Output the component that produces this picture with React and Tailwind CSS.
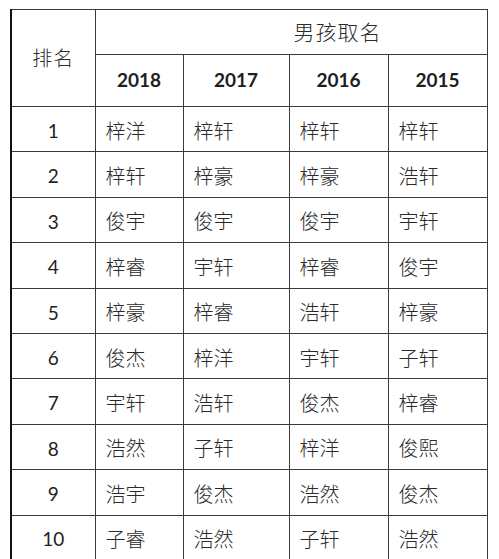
import React from "react";

const years = ["2018", "2017", "2016", "2015"];

const rows = [
  ["梓洋", "梓轩", "梓轩", "梓轩"],
  ["梓轩", "梓豪", "梓豪", "浩轩"],
  ["俊宇", "俊宇", "俊宇", "宇轩"],
  ["梓睿", "宇轩", "梓睿", "俊宇"],
  ["梓豪", "梓睿", "浩轩", "梓豪"],
  ["俊杰", "梓洋", "宇轩", "子轩"],
  ["宇轩", "浩轩", "俊杰", "梓睿"],
  ["浩然", "子轩", "梓洋", "俊熙"],
  ["浩宇", "俊杰", "浩然", "俊杰"],
  ["子睿", "浩然", "子轩", "浩然"],
];

const cjk = "font-['SimSun','Noto_Sans_CJK_SC',sans-serif] font-light text-[#2a2a2a]";
const num = "font-['Lato','Liberation_Sans',sans-serif]";
const cell = "border-[1.5px] border-[#3a3a3a]";

const App = () => {
  return (
    <div className="w-[499px] h-[559px] overflow-hidden bg-white text-[#1e1e1e] pt-[9px] pl-[10px]">
      <table className="table-fixed border-collapse w-[476px] border-l-2 border-l-[#111]">
        <colgroup>
          <col className="w-[84px]" />
          <col className="w-[88px]" />
          <col className="w-[106px]" />
          <col className="w-[99px]" />
          <col className="w-[99px]" />
        </colgroup>
        <thead>
          {/* 男孩取名 header */}
          <tr className="h-[45px]">
            <th
              rowSpan={2}
              className={`${cell} border-l-2 border-l-[#111] ${cjk} text-[20px] tracking-[1px]`}
            >
              排名
            </th>
            <th colSpan={4} className={`${cell} ${cjk} text-[21px] text-left pl-[198px] tracking-[1px]`}>
              男孩取名
            </th>
          </tr>
          <tr className="h-[52px]">
            {years.map((y) => (
              <th key={y} className={`${cell} ${num} font-bold text-[19px]`}>
                {y}
              </th>
            ))}
          </tr>
        </thead>
        <tbody>
          {rows.map((r, i) => (
            <tr key={i} className="h-[45.4px]">
              <td className={`${cell} border-l-2 border-l-[#111] ${num} text-[19px] text-center pt-[4px]`}>
                {i + 1}
              </td>
              {r.map((name, j) => (
                <td key={j} className={`${cell} ${cjk} text-[20px] pl-[10px] pt-[3px]`}>
                  {name}
                </td>
              ))}
            </tr>
          ))}
        </tbody>
      </table>
    </div>
  );
};

export default App;
